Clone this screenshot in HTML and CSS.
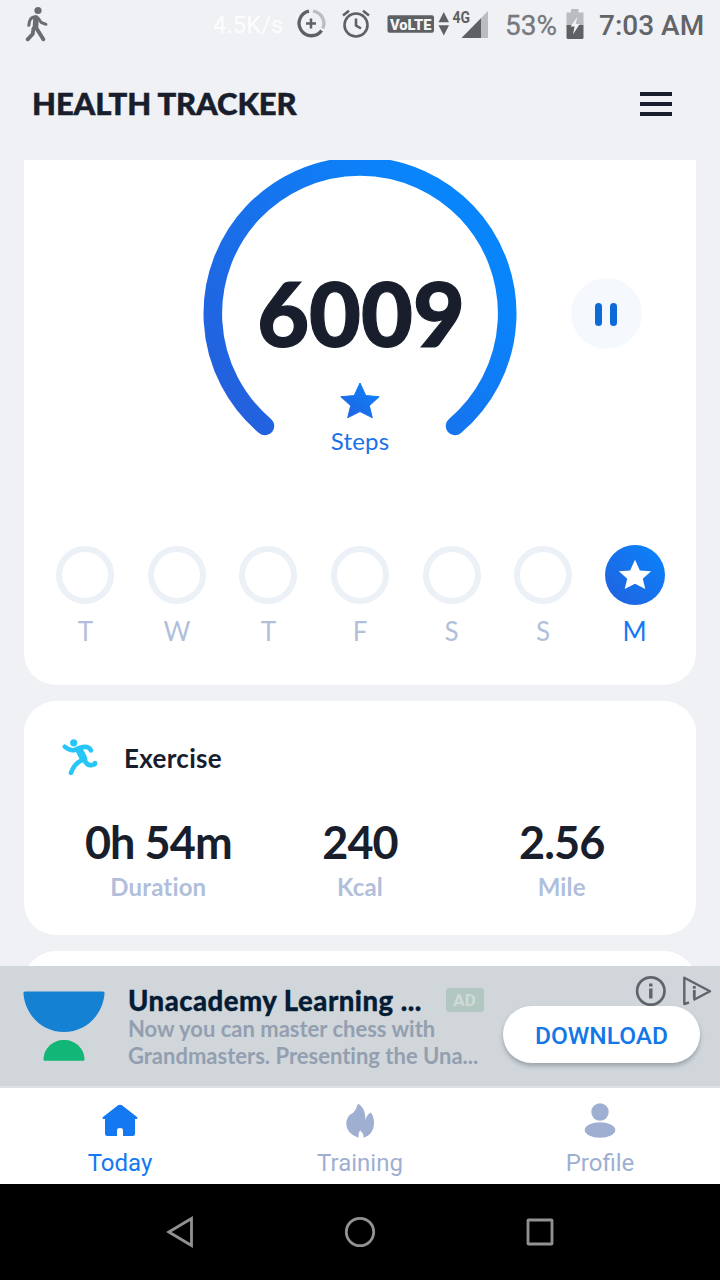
FILE: index.html
```html
<!DOCTYPE html>
<html lang="en">
<head>
<meta charset="utf-8">
<title>Health Tracker</title>
<link rel="stylesheet" href="styles.css">
</head>
<body>
<div class="screen">
  <div class="status">
    <svg class="walker" width="24" height="36" viewBox="25 6 24 36" fill="none" stroke="#6b6c6f" stroke-linecap="round" stroke-linejoin="round">
      <circle cx="38" cy="10.500" r="3.600" fill="#6b6c6f" stroke="none"/>
      <path d="M36 18L35.500 26.500" stroke-width="5.600"/>
      <path d="M35 16.800Q29.500 17 28.800 25.300M38.500 18.500L41 22.300L46 24.300" stroke-width="3"/>
      <path d="M36 27.500L43.300 39.300M33.500 28.500L32.700 34L27.700 39.300" stroke-width="3.900"/>
    </svg>
    <span class="speed">4.5K/s</span>
    <svg class="saver" width="30" height="30" viewBox="0 0 30 30" fill="none">
      <path d="M13 2.200A12.400 12.400 0 1 0 25.600 21.500" stroke="#5f6063" stroke-width="3.300"/>
      <path d="M17 2.200A12.400 12.400 0 0 1 26.800 19.500" stroke="#bcbdc0" stroke-width="3.300"/>
      <path d="M15 9.500V19.500M10 14.500H20" stroke="#5f6063" stroke-width="2.500"/>
    </svg>
    <svg class="alarm" width="30" height="30" viewBox="0 0 30 30" fill="none" stroke="#5f6063" stroke-width="2.600">
      <circle cx="15" cy="16" r="11.500"/>
      <path d="M15 9.500V16.500L20 19.500M2 6.500L8 1.800M28 6.500L22 1.800"/>
    </svg>
    <svg class="network" width="104" height="32" viewBox="386 8 104 32">
      <rect x="387.500" y="15.300" width="46.500" height="17.500" rx="2" fill="#5f6063"/>
      <text class="volte" x="390" y="29.500" textLength="41.500" lengthAdjust="spacingAndGlyphs">VoLTE</text>
      <path d="M438.500 22.300L443.800 12L449 22.300ZM438.500 25.300H449L443.800 35.600Z" fill="#5f6063"/>
      <path d="M461.500 38L488 11V38Z" fill="#bbbcbf"/>
      <path d="M461.500 38L481 18.200V38Z" fill="#5f6063"/>
      <text class="fourg" x="452.500" y="22.500" textLength="17.500" lengthAdjust="spacingAndGlyphs">4G</text>
    </svg>
    <span class="percent">53%</span>
    <svg class="battery" width="18" height="31" viewBox="0 0 18 31">
      <path d="M5 0H12.500V3.500H17.500V16H0.500V3.500H5Z" fill="#bbbcbf"/>
      <path d="M0.500 16H17.500V28.500Q17.500 30 16 30H2Q0.500 30 0.500 28.500Z" fill="#5f6063"/>
      <path d="M11.300 8L4.500 17.500H8.600L7 25.500L13.700 15H9.700Z" fill="#f1f2f4"/>
    </svg>
    <span class="clock">7:03 AM</span>
  </div>

  <header class="header">
    <h1 class="title">HEALTH TRACKER</h1>
    <div class="menu"><i></i><i></i><i></i></div>
  </header>

  <main class="content">
    <section class="card steps">
      <div class="hero">
        <svg class="ring" width="314" height="314" viewBox="0 0 314 314">
          <defs>
            <linearGradient id="ringBlue" gradientUnits="userSpaceOnUse" x1="40" y1="270" x2="270" y2="90">
              <stop offset="0" stop-color="#2460dd"/><stop offset="1" stop-color="#0985fc"/>
            </linearGradient>
            <linearGradient id="blue" x1="0" y1="1" x2="1" y2="0">
              <stop offset="0" stop-color="#2360de"/><stop offset="1" stop-color="#0985fc"/>
            </linearGradient>
          </defs>
          <path d="M62 269A147.200 147.200 0 1 1 252 269" fill="none" stroke="url(#ringBlue)" stroke-width="18.600" stroke-linecap="round"/>
        </svg>
        <div class="count">
          <div class="number">6009</div>
          <svg class="star" width="40" height="37" viewBox="0 0 40 37"><path d="M20 1L25.800 13.600L39.200 14.700L29.300 23.700L32.300 35.700L20 29.600L7.700 35.700L10.700 23.700L0.800 14.700L14.200 13.600Z" fill="url(#blue)" stroke="url(#blue)" stroke-linejoin="round"/></svg>
          <div class="unit">Steps</div>
        </div>
        <div class="pause"><i></i><i></i></div>
      </div>
      <div class="days">
        <div class="day"><div class="dot"></div><span>T</span></div>
        <div class="day"><div class="dot"></div><span>W</span></div>
        <div class="day"><div class="dot"></div><span>T</span></div>
        <div class="day"><div class="dot"></div><span>F</span></div>
        <div class="day"><div class="dot"></div><span>S</span></div>
        <div class="day"><div class="dot"></div><span>S</span></div>
        <div class="day today"><div class="dot"><svg width="34" height="31" viewBox="0 0 40 37"><path d="M20 1L25.800 13.600L39.200 14.700L29.300 23.700L32.300 35.700L20 29.600L7.700 35.700L10.700 23.700L0.800 14.700L14.200 13.600Z" fill="#fff"/></svg></div><span>M</span></div>
      </div>
    </section>

    <section class="card exercise">
      <div class="card-head">
        <svg width="38" height="38" viewBox="61 738 38 38" fill="none" stroke="#26c6f7" stroke-linecap="round" stroke-linejoin="round">
          <circle cx="73.700" cy="742.800" r="3.600" fill="#26c6f7" stroke="none"/>
          <path d="M64.700 746.700Q69 750.700 74 750.200Q80 746.700 85.500 746.700Q89.500 747.200 91 750.500" stroke-width="4.500"/>
          <path d="M79.500 750.500L83.500 758.500" stroke-width="7.500"/>
          <path d="M82 760Q74 764 71 772.700M84.500 760Q87 766 92 765Q95 764.500 95 763.200" stroke-width="4.700"/>
        </svg>
        <h2>Exercise</h2>
      </div>
      <div class="stats">
        <div class="stat"><b>0h 54m</b><span>Duration</span></div>
        <div class="stat"><b>240</b><span>Kcal</span></div>
        <div class="stat"><b>2.56</b><span>Mile</span></div>
      </div>
    </section>
    <section class="card next"></section>
  </main>

  <aside class="ad">
    <svg class="ad-logo" width="82" height="72" viewBox="0 0 82 72">
      <path d="M2 0.500H80Q82 0.500 81.500 3C79.500 25 62 41 41 41C20 41 2.500 25 0.500 3Q0 0.500 2 0.500Z" fill="#1581d2"/>
      <path d="M20.500 69C20.500 57 30 49 41 49C52 49 61.500 57 61.500 69Q61.500 69.700 60.700 69.700H21.300Q20.500 69.700 20.500 69Z" fill="#12b676"/>
    </svg>
    <div class="ad-copy">
      <div class="ad-line"><strong>Unacademy Learning ...</strong><em>AD</em></div>
      <p>Now you can master chess with<br>Grandmasters. Presenting the Una...</p>
    </div>
    <div class="ad-action">
      <svg class="ad-marks" width="78" height="32" viewBox="634 975 78 32" fill="none" stroke="#5f656a" stroke-width="2.700">
        <circle cx="650.800" cy="991" r="13.700"/>
        <path d="M650.800 988.500V998.500M650.800 983.500V986.500" stroke-width="3.400"/>
        <path d="M689 1002.500L684.300 1004V977.800L710 991.300L693.500 1000" stroke-width="2.400" stroke-linejoin="round"/>
        <path d="M694.300 990V998.800M694.300 986V988.700" stroke-width="2.800"/>
      </svg>
      <button class="download">DOWNLOAD</button>
    </div>
  </aside>

  <nav class="tabs">
    <div class="tab active">
      <svg width="38" height="36" viewBox="0 0 38 36"><path d="M16.700 2.500Q19 0.800 21.300 2.500L36 14Q37.500 16 34.800 16H34V30.500Q34 33 31.500 33H22V27.300Q22 25 19 25Q16 25 16 27.300V33H6.500Q4 33 4 30.500V16H3.200Q0.500 16 2 14Z" fill="#1479f0"/></svg>
      <span>Today</span>
    </div>
    <div class="tab">
      <svg width="38" height="36" viewBox="0 0 38 36"><path d="M17 0.500Q22 3.500 23.500 9Q24.500 12.500 24.500 17.500Q25.500 11.500 30 9.500Q33.500 15 33 21.500Q32 32 22.500 34.700Q23 32 21.500 30Q19 28.500 19.500 27Q17 30 17.500 34.700Q5.500 31 5.200 20.500Q5.500 13 12.500 9.500Q15.500 6 17 0.500Z" fill="#9fafd1"/></svg>
      <span>Training</span>
    </div>
    <div class="tab">
      <svg width="38" height="36" viewBox="0 0 38 36" fill="#9fafd1"><circle cx="19" cy="9" r="8.700"/><ellipse cx="19" cy="27" rx="15.300" ry="7.700"/></svg>
      <span>Profile</span>
    </div>
  </nav>

  <div class="system">
    <svg width="36" height="36" viewBox="0 0 36 36"><path d="M29.500 4.500V31.500L6.800 18Z"/></svg>
    <svg width="36" height="36" viewBox="0 0 36 36"><circle cx="18" cy="18" r="13.700"/></svg>
    <svg width="36" height="36" viewBox="0 0 36 36"><rect x="6" y="6" width="24" height="24" rx="0.500"/></svg>
  </div>
</div>
</body>
</html>
```
FILE: styles.css
```css
* { box-sizing: border-box; margin: 0; padding: 0; }
body { background: #eff1f5; font-family: Lato, sans-serif; font-variant-ligatures: none; color: #191e2c; }
svg { display: block; flex: none; }
.screen { width: 720px; height: 1280px; display: flex; flex-direction: column; overflow: hidden; }

.status { height: 48px; flex: none; display: flex; align-items: flex-start; font-family: Roboto, sans-serif; white-space: nowrap; }
.status span { flex: none; line-height: 32px; }
.walker { margin: 6px 0 0 25px; }
.speed { width: 84px; margin: 9px 0 0 164px; font-size: 23.500px; color: #fdfdfe; letter-spacing: 0.200px; }
.saver { margin-top: 9px; margin-left: -1px; }
.alarm { margin: 9px 0 0 15px; }
.network { margin: 8px 0 0 15px; }
.volte { font: 900 15px Roboto, sans-serif; fill: #f4f5f7; }
.fourg { font: 700 16.500px Roboto, sans-serif; fill: #5f6063; }
.percent { width: 61px; margin: 10px 0 0 15px; font-size: 28px; color: #77797c; -webkit-text-stroke: 0.300px #77797c; }
.battery { margin: 9px 0 0 0; }
.clock { margin: 10px 0 0 15px; font-size: 28px; font-weight: 500; color: #626468; }

.header { height: 112px; flex: none; display: flex; align-items: center; justify-content: space-between; padding: 0 48px 0 32px; }
.title { font-family: "Lato Black", Lato, sans-serif; font-size: 31px; font-weight: 900; line-height: 38px; margin-top: -2px; letter-spacing: -0.100px; -webkit-text-stroke: 0.500px #191e2c; }
.menu { width: 32px; display: grid; gap: 6px; }
.menu i { height: 4px; background: #191e2c; }

.content { height: 806px; flex: none; overflow: hidden; padding: 0 24px; display: flex; flex-direction: column; gap: 16px; }
.card { background: #fff; border-radius: 32px; flex: none; }
.steps { height: 528px; margin-top: -3px; border-radius: 0 0 32px 32px; }
.hero { display: grid; grid-template-columns: 179px 314px 179px; height: 314px; }
.ring { grid-area: 1 / 2; margin-top: -0.500px; }
.count { grid-area: 1 / 2; display: flex; flex-direction: column; align-items: center; padding-top: 106px; }
.number { padding-left: 2px; font-family: "Lato Black", Lato, sans-serif; font-size: 89.500px; line-height: 100px; font-weight: 900; -webkit-text-stroke: 1.200px #191e2c; }
.star { margin-top: 19px; }
.unit { margin-top: 8px; font-size: 24px; line-height: 28px; color: #1b71e8; letter-spacing: 0.200px; }
.pause { grid-area: 1 / 3; place-self: center; width: 71px; height: 71px; margin-top: -1px; border-radius: 50%; background: #f5f9fd; display: flex; align-items: center; justify-content: center; gap: 8px; padding: 1px 2px 0 0; }
.pause i { width: 7px; height: 23px; border-radius: 4px; background: #0d6bd8; }
.days { display: grid; grid-template-columns: repeat(7, 1fr); padding: 73.600px 15.700px 0; }
.day { display: flex; flex-direction: column; align-items: center; font-size: 26px; line-height: 30px; color: #b1bfdb; }
.dot { width: 58px; height: 58px; margin: 1px 0 12px; border: 6px solid #ecf0f7; border-radius: 50%; }
.today { color: #1479f0; }
.today .dot { width: 60px; height: 60px; margin: 0 0 11px; border: 0; background: linear-gradient(45deg, #2360de, #0985fc); display: grid; place-items: center; }

.exercise { height: 234px; }
.card-head { display: flex; padding: 37px 0 0 37px; gap: 25px; height: 111px; }
.card-head h2 { font-size: 26px; line-height: 40px; font-weight: 700; letter-spacing: 0.300px; }
.stats { display: grid; grid-template-columns: repeat(3, 1fr); padding: 0 33.500px; }
.stat { display: flex; flex-direction: column; align-items: center; }
.stat b { margin-top: 1px; font-size: 45px; line-height: 58px; font-weight: 700; letter-spacing: -0.900px; }
.stat span { margin-top: 2px; font-size: 24px; line-height: 28px; font-weight: 700; letter-spacing: 0.150px; color: #b1bfdb; }
.next { height: 200px; }

.ad { height: 122px; flex: none; display: flex; background: #d0d6da; border-bottom: 2px solid #dde3e5; padding-left: 23px; overflow: hidden; }
.ad-logo { margin-top: 25px; }
.ad-copy { width: 380px; flex: none; margin-left: 23px; padding-top: 18px; white-space: nowrap; }
.ad-line { height: 32px; display: flex; align-items: center; }
.ad-line strong { width: 317.500px; padding-top: 2px; font-family: "Lato Black", Lato, sans-serif; font-size: 27.500px; line-height: 32px; font-weight: 900; letter-spacing: 0.500px; color: #041c35; -webkit-text-stroke: 0.300px #041c35; }
.ad-line em { width: 38px; height: 24px; border-radius: 3px; background: #b3c7c2; color: #cfdad8; font: 700 17px/24px Roboto, sans-serif; text-align: center; }
.ad-copy p { font-size: 22px; line-height: 26.500px; font-weight: 700; color: #939fb0; }
.ad-action { width: 212px; flex: none; padding-top: 9px; margin-left: -5px; }
.ad-marks { margin-left: 131px; }
.download { display: block; width: 197px; height: 57px; margin-top: -1px; padding-top: 2px; border: 0; border-radius: 29px; background: #fff; box-shadow: 0 3px 4px rgba(60, 70, 80, .35); font: 500 24.500px/55px Roboto, sans-serif; color: #1477e8; }

.tabs { height: 96px; flex: none; background: #fff; display: grid; grid-template-columns: repeat(3, 1fr); }
.tab { display: flex; flex-direction: column; align-items: center; padding-top: 15px; font: 24px/32px Roboto, sans-serif; color: #9fafd1; }
.tab span { margin-top: 8px; }
.tab.active { color: #1479f0; }

.system { height: 96px; flex: none; background: #000; display: flex; justify-content: center; align-items: center; gap: 144px; }
.system svg { fill: none; stroke: #929292; stroke-width: 2.800; }
```
